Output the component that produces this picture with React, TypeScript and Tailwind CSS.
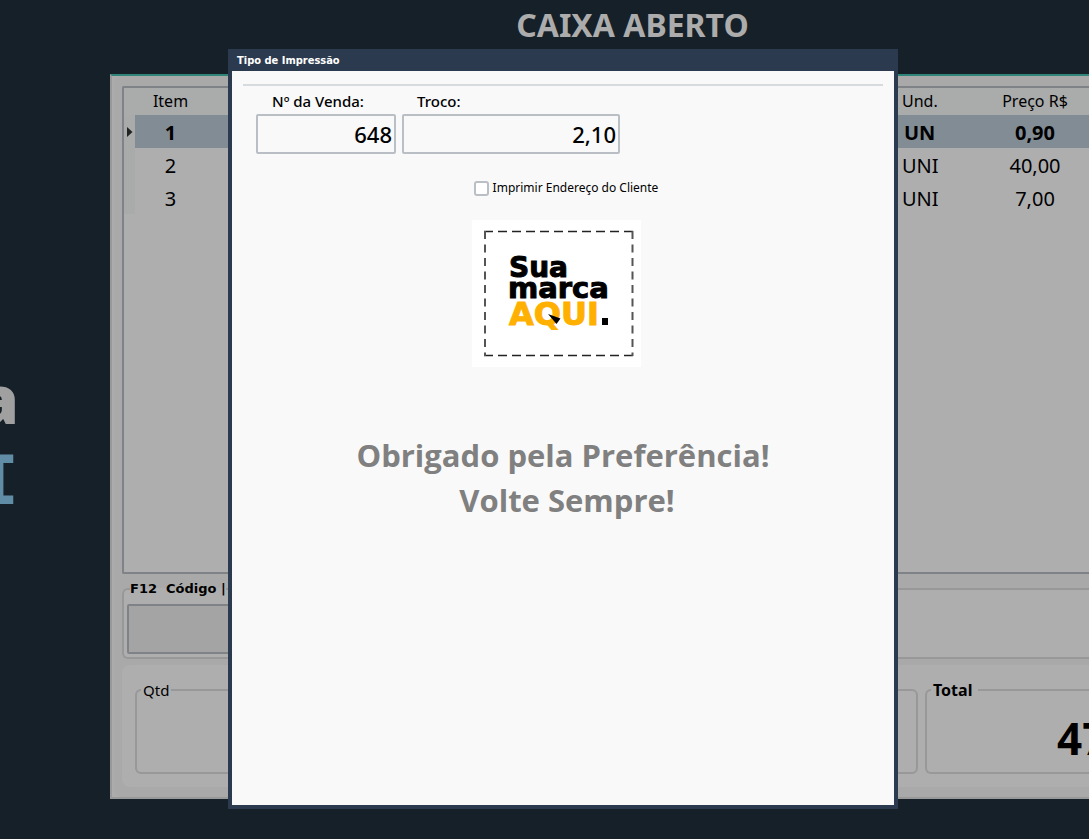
const items = [
  { item: "1", unit: "UN", price: "0,90", selected: true },
  { item: "2", unit: "UNI", price: "40,00", selected: false },
  { item: "3", unit: "UNI", price: "7,00", selected: false },
]

function BrandLogo() {
  return (
    <svg width="169" height="147" viewBox="0 0 169 147" role="img" aria-label="Sua marca aqui">
      <rect width="169" height="147" fill="#fff" />
      <path d="M12 11.500H162M12 135.500H162" stroke="#222" strokeWidth="1.500" strokeDasharray="9 5" />
      <path d="M13 11V136M160.500 11V136" stroke="#555" strokeWidth="2" strokeDasharray="8 5.500" />
      <g fontFamily="DejaVu Sans, sans-serif" fontWeight="700" strokeWidth="1">
        <text x="37" y="57" fontSize="28" stroke="#000">Sua</text>
        <text x="36" y="78" fontSize="29" stroke="#000">marca</text>
        <text x="37" y="105" fontSize="32" fill="#ffb000" stroke="#ffb000">AQUI</text>
        <rect x="130" y="98" width="6" height="7" />
      </g>
      <path d="M76 94L88.500 98.500L84.500 104Z" />
    </svg>
  )
}

function BackgroundBrand() {
  return (
    <aside className="w-[110px] shrink-0 pt-[284px] font-bold">
      <div className="flex w-[19px] flex-col items-end overflow-hidden">
        <span className="font-['Open_Sans',sans-serif] text-[68px] leading-[80px] font-extrabold text-[#a0a0a0]">a</span>
        <span className="mt-[3px] font-['DejaVu_Sans_Mono',monospace] text-[68px] leading-[80px] text-[#618ca6]">I</span>
      </div>
    </aside>
  )
}

function ItemsTable() {
  return (
    <div className="h-[488px] rounded-l-xs border-2 border-r-0 border-[#7f8388]">
      <table className="w-full table-fixed text-xl">
        <colgroup>
          <col className="w-[11px]" />
          <col className="w-[71px]" />
          <col />
          <col className="w-[83px]" />
          <col className="w-[108px]" />
        </colgroup>
        <thead>
          <tr className="h-[27px] bg-[#aaabab] text-base leading-5">
            <th></th>
            <th className="pb-0.5 font-normal">Item</th>
            <th></th>
            <th className="pb-0.5 pl-1 text-left font-normal">Und.</th>
            <th className="pb-0.5 font-normal">Preço R$</th>
          </tr>
        </thead>
        <tbody>
          {items.map((row) => (
            <tr key={row.item} className={row.selected ? "h-[33px] bg-[#828c95] font-bold" : "h-[33px]"}>
              <td className="bg-[#a9aaaa]">
                {row.selected && (
                  <svg width="6" height="10" viewBox="0 0 6 10" className="ml-[3px]">
                    <path d="M0 0L5.500 5L0 10Z" fill="#222" />
                  </svg>
                )}
              </td>
              <td className="pt-0.5 text-center leading-6">{row.item}</td>
              <td></td>
              <td className={row.selected ? "pt-0.5 pl-1.5 leading-6" : "pt-0.5 pl-1 leading-6"}>{row.unit}</td>
              <td className="pt-0.5 text-center leading-6">{row.price}</td>
            </tr>
          ))}
        </tbody>
      </table>
    </div>
  )
}

function SalePanel() {
  return (
    <section className="min-w-0 flex-1 border-t-2 border-b-2 border-l-2 border-t-[#2f8579] border-b-[#999] border-l-[#999] bg-[#acacac] pl-0.5">
      <div className="rounded-l-lg bg-[#a9a9a9] pt-2.5 pb-2.5 pl-2">
        <div className="bg-[#aeaeae]">
          <ItemsTable />
        </div>
        <fieldset className="mt-1.5 h-[79px] rounded-l-md border-2 border-r-0 border-[#989898] bg-[#aeaeae] pl-[3px]">
          <legend className="ml-[3px] font-['DejaVu_Sans',sans-serif] text-[13px] leading-[18px] font-bold whitespace-pre">
            <label htmlFor="code">F12  Código |</label>
          </legend>
          <input
            id="code"
            className="mt-1.5 h-[50px] w-80 rounded-xs border-2 border-[#7f8388] bg-[#a4a4a4] px-2 outline-none"
          />
        </fieldset>
        <div className="mt-1.5 flex gap-[7px] rounded-l-lg bg-[#aeaeae] pt-[15px] pb-[13px] pl-[13px]">
          <fieldset className="h-[94px] min-w-0 flex-1 rounded-md border-2 border-[#989898]">
            <legend className="ml-1 px-0.5 text-[15px] leading-5">Qtd</legend>
          </fieldset>
          <fieldset className="h-[94px] w-[164px] min-w-0 shrink-0 rounded-l-md border-2 border-r-0 border-[#989898]">
            <legend className="ml-1 pr-1.5 pl-0.5 text-base leading-5 font-bold">Total</legend>
            <div className="mt-2 overflow-hidden pl-[130px] text-[44px] leading-[60px] font-bold">47</div>
          </fieldset>
        </div>
      </div>
    </section>
  )
}

function PrintDialog() {
  return (
    <div
      role="dialog"
      aria-labelledby="dialog-title"
      className="flex w-[670px] flex-col border-4 border-t-0 border-[#2c3a50] bg-[#f9f9f9]"
    >
      <h2
        id="dialog-title"
        className="h-[22px] bg-[#2c3a50] pl-[5px] font-['DejaVu_Sans_Condensed','DejaVu_Sans',sans-serif] text-[11px] leading-6 font-bold text-white"
      >
        Tipo de Impressão
      </h2>
      <div className="mx-[11px] mt-[13px] border-t-2 border-[#d7dbde]" />
      <div className="mt-1 ml-6 flex gap-1.5">
        <div className="w-[140px]">
          <label htmlFor="sale" className="mb-0.5 block pl-4 text-[15px] leading-[22px] font-medium">
            Nº da Venda:
          </label>
          <input
            id="sale"
            readOnly
            defaultValue="648"
            className="h-10 w-full rounded-xs border-2 border-[#b9bfc4] px-0.5 text-right text-[22px] font-medium outline-none"
          />
        </div>
        <div className="w-[218px]">
          <label htmlFor="change" className="mb-0.5 block pl-[15px] text-[15px] leading-[22px] font-medium">
            Troco:
          </label>
          <input
            id="change"
            readOnly
            defaultValue="2,10"
            className="h-10 w-full rounded-xs border-2 border-[#b9bfc4] px-0.5 text-right text-[22px] font-medium outline-none"
          />
        </div>
      </div>
      <label className="mt-6 flex items-center justify-center gap-1 pl-1.5 text-xs leading-5">
        <input
          type="checkbox"
          className="size-[15px] appearance-none rounded-[3px] border-2 border-[#b9bfc4] bg-white checked:bg-[#2c3a50]"
        />
        Imprimir Endereço do Cliente
      </label>
      <div className="mt-[22px] flex justify-center pr-[13px]">
        <BrandLogo />
      </div>
      <div className="mt-[66px] text-center font-['Open_Sans',sans-serif] text-[31px] leading-[45px] font-bold text-[#808080]">
        <p>Obrigado pela Preferência!</p>
        <p className="pl-2">Volte Sempre!</p>
      </div>
    </div>
  )
}

export default function App() {
  return (
    <div className="relative flex min-h-screen flex-col overflow-hidden bg-[#162028] pb-10 font-['Noto_Sans',sans-serif] text-black">
      <h1 className="h-[74px] pl-44 text-center text-[32px] leading-[50px] font-bold text-[#acacac]">CAIXA ABERTO</h1>
      <div className="flex flex-1">
        <BackgroundBrand />
        <SalePanel />
      </div>
      <div className="absolute inset-0 flex justify-center pt-[49px] pb-[30px] pl-[37px]">
        <PrintDialog />
      </div>
    </div>
  )
}
